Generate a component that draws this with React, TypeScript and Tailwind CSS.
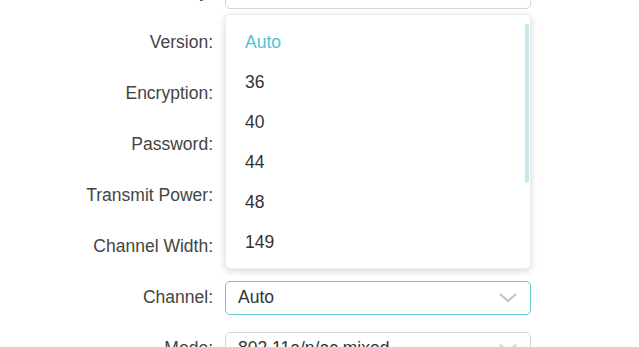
import { useState } from 'react';

const rows = [
  { label: 'Security:', kind: 'input' },
  { label: 'Version:', kind: 'none' },
  { label: 'Encryption:', kind: 'none' },
  { label: 'Password:', kind: 'none' },
  { label: 'Transmit Power:', kind: 'none' },
  { label: 'Channel Width:', kind: 'none' },
  { label: 'Channel:', kind: 'channel' },
  { label: 'Mode:', kind: 'mode' },
];

const channels = ['Auto', '36', '40', '44', '48', '149', '153', '157', '161', '165'];

function Chevron({ color }: { color: string }) {
  return (
    <svg width="18" height="10" viewBox="0 0 18 10" fill="none" className="absolute right-[13px] top-1/2 -translate-y-1/2">
      <path d="M1.5 1.5 L9 8 L16.5 1.5" stroke={color} strokeWidth="2.2" strokeLinecap="round" strokeLinejoin="round" />
    </svg>
  );
}

export default function App() {
  const [selected] = useState('Auto');

  return (
    <div className="w-[639px] h-[347px] overflow-hidden bg-white font-['Liberation_Sans',Arial,sans-serif] text-[17.5px] text-[#444]">
      <div className="-mt-[25px] flex flex-col gap-[17px]">
        {rows.map((row) => (
          <div key={row.label} className="flex items-center h-[34px]">
            <div className="w-[213px] text-right leading-none -mt-[1px]">{row.label}</div>
            <div className="ml-[12px] w-[306px] h-[34px] relative">
              {row.kind === 'input' && (
                <div className="h-full rounded-[5px] border border-[#d2d2d2] bg-white" />
              )}
              {row.kind === 'channel' && (
                <>
                  <div className="h-full rounded-[5px] border border-[#66c8cf] bg-white flex items-center pl-[12px] relative">
                    <span className="leading-none text-[#333]">{selected}</span>
                    <Chevron color="#c4c4c4" />
                  </div>
                  {/* open dropdown list */}
                  <div className="absolute left-0 right-0 bottom-[calc(100%+12px)] h-[255px] rounded-[5px] border border-[#ececec] bg-white shadow-[0_2px_7px_rgba(0,0,0,0.16)] overflow-hidden z-10">
                    <div className="pt-[8px]">
                      {channels.map((c) => (
                        <div
                          key={c}
                          className={`h-[40px] flex items-center pl-[19px] leading-none ${c === selected ? 'text-[#4fc4d2]' : 'text-[#333]'}`}
                        >
                          {c}
                        </div>
                      ))}
                    </div>
                    <div className="absolute right-[1px] top-[9px] w-[4px] h-[159px] rounded-full bg-[#c3eaee]" />
                  </div>
                </>
              )}
              {row.kind === 'mode' && (
                <div className="h-full rounded-[5px] border border-[#d6d6d6] bg-white flex items-center pl-[12px] relative">
                  <span className="leading-none text-[#333]">802.11a/n/ac mixed</span>
                  <Chevron color="#d0d0d0" />
                </div>
              )}
            </div>
          </div>
        ))}
      </div>
    </div>
  );
}
